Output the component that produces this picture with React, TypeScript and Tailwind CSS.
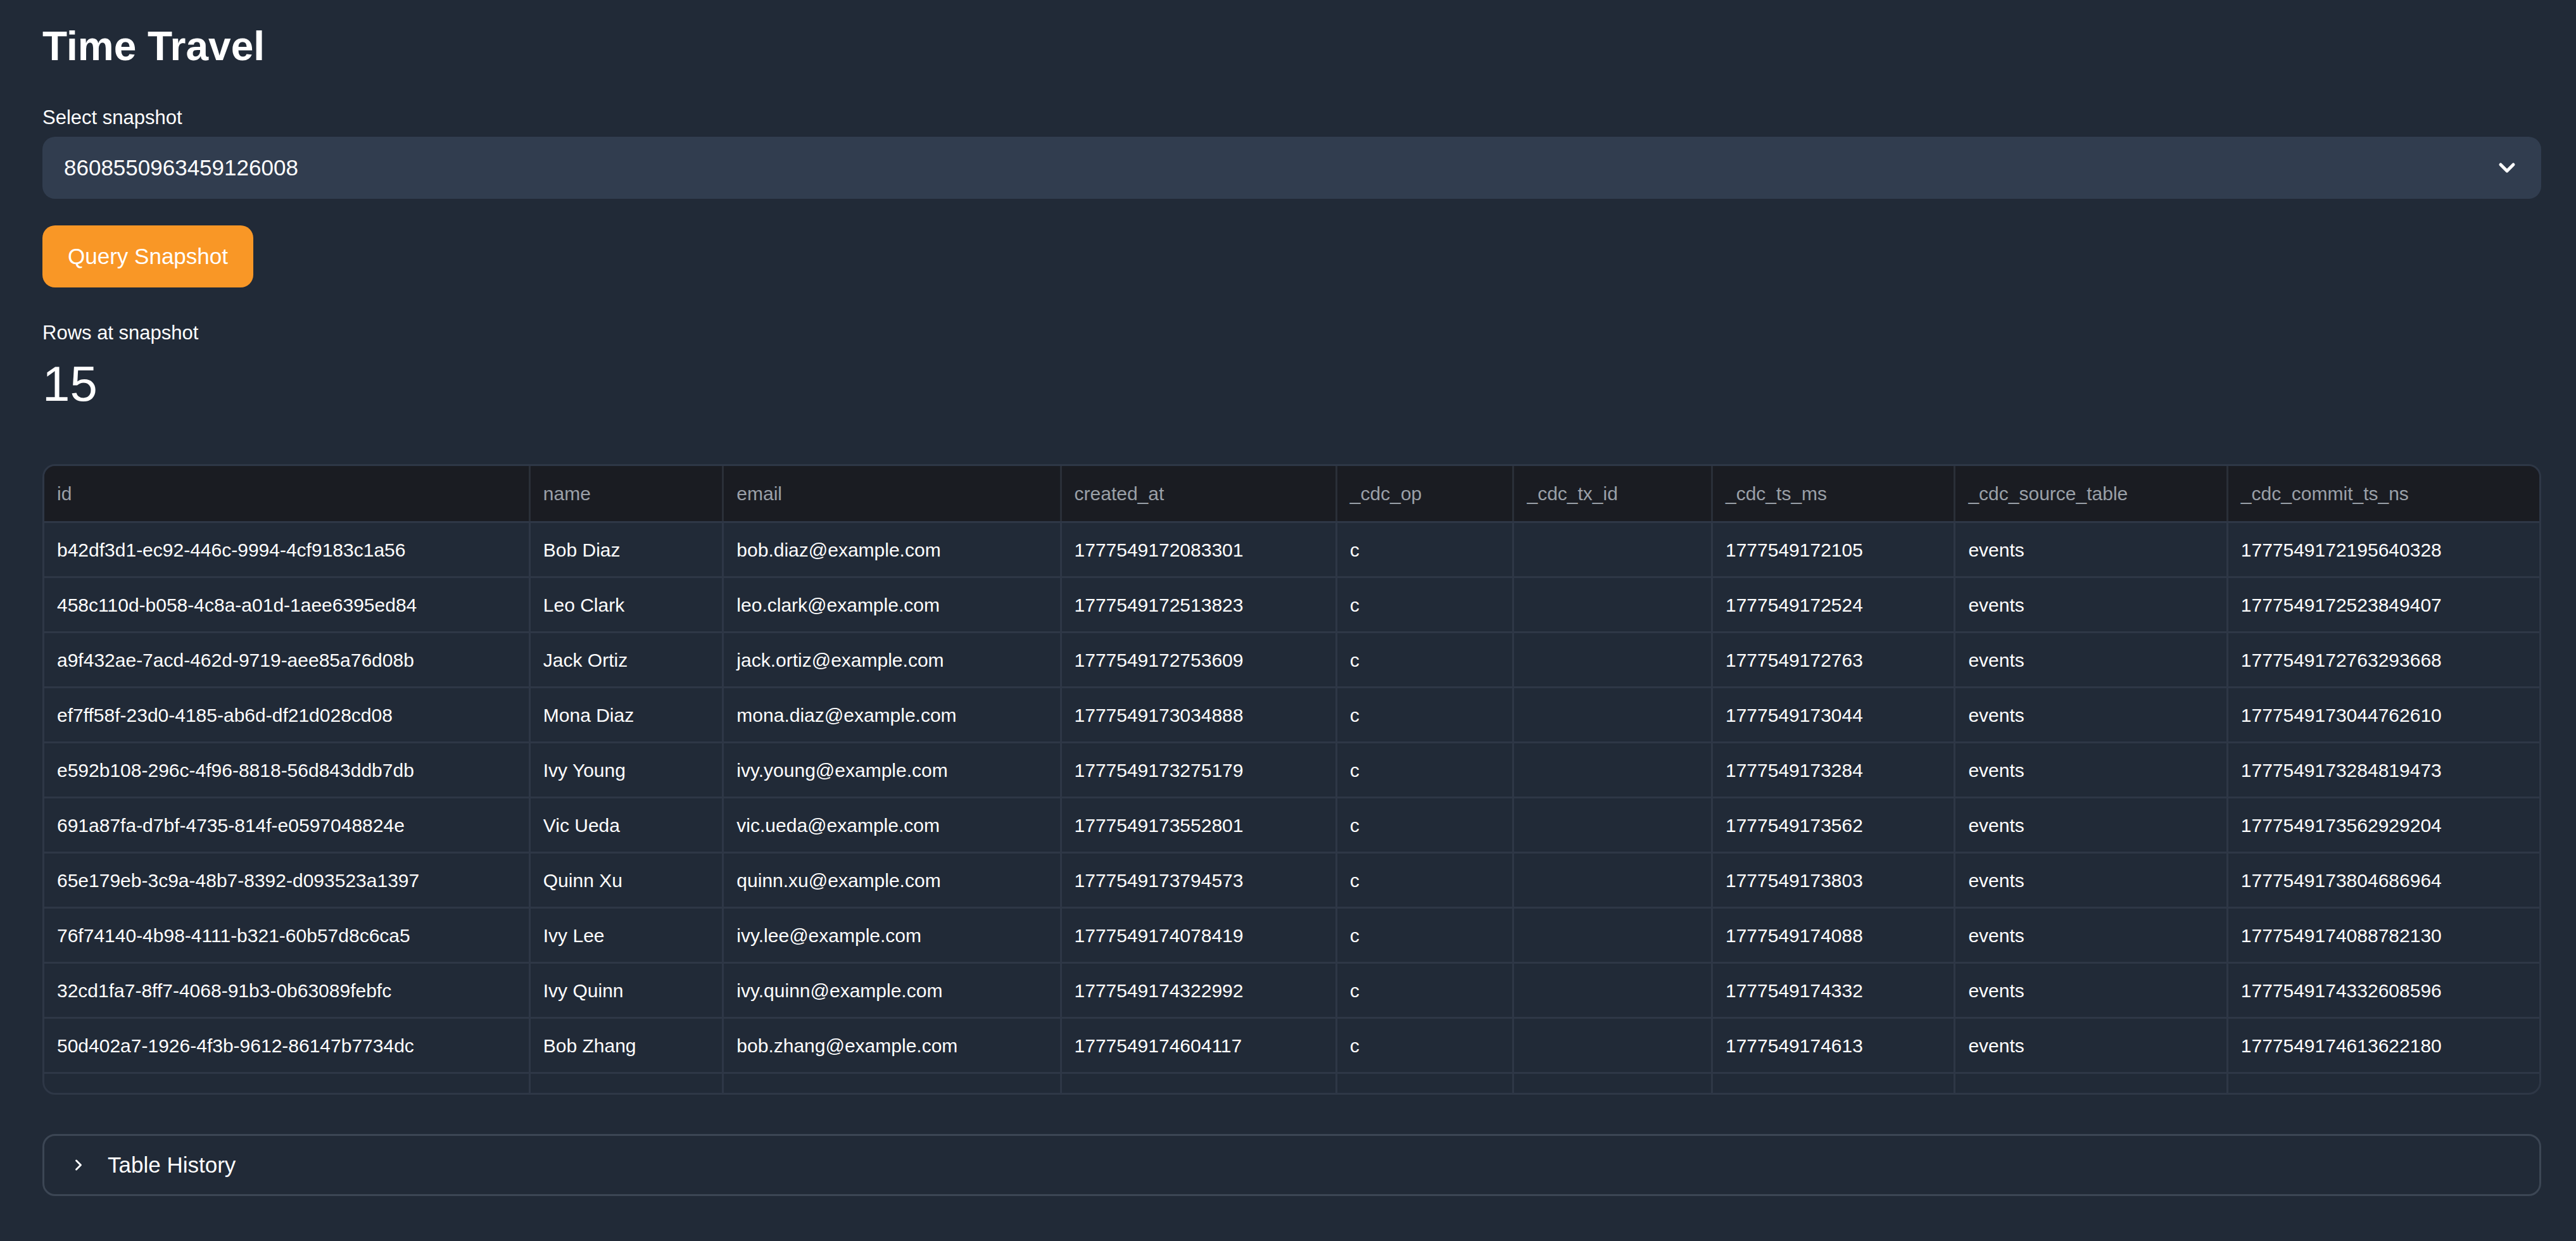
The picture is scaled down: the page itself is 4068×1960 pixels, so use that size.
import React from "react";

const cols = [
  { k: "id", w: 766 },
  { k: "name", w: 306 },
  { k: "email", w: 534 },
  { k: "created_at", w: 436 },
  { k: "_cdc_op", w: 280 },
  { k: "_cdc_tx_id", w: 314 },
  { k: "_cdc_ts_ms", w: 384 },
  { k: "_cdc_source_table", w: 431 },
  { k: "_cdc_commit_ts_ns", w: 495 },
];

const rows = [
  ["b42df3d1-ec92-446c-9994-4cf9183c1a56", "Bob Diaz", "bob.diaz@example.com", "1777549172083301", "c", "", "1777549172105", "events", "1777549172195640328"],
  ["458c110d-b058-4c8a-a01d-1aee6395ed84", "Leo Clark", "leo.clark@example.com", "1777549172513823", "c", "", "1777549172524", "events", "1777549172523849407"],
  ["a9f432ae-7acd-462d-9719-aee85a76d08b", "Jack Ortiz", "jack.ortiz@example.com", "1777549172753609", "c", "", "1777549172763", "events", "1777549172763293668"],
  ["ef7ff58f-23d0-4185-ab6d-df21d028cd08", "Mona Diaz", "mona.diaz@example.com", "1777549173034888", "c", "", "1777549173044", "events", "1777549173044762610"],
  ["e592b108-296c-4f96-8818-56d843ddb7db", "Ivy Young", "ivy.young@example.com", "1777549173275179", "c", "", "1777549173284", "events", "1777549173284819473"],
  ["691a87fa-d7bf-4735-814f-e0597048824e", "Vic Ueda", "vic.ueda@example.com", "1777549173552801", "c", "", "1777549173562", "events", "1777549173562929204"],
  ["65e179eb-3c9a-48b7-8392-d093523a1397", "Quinn Xu", "quinn.xu@example.com", "1777549173794573", "c", "", "1777549173803", "events", "1777549173804686964"],
  ["76f74140-4b98-4111-b321-60b57d8c6ca5", "Ivy Lee", "ivy.lee@example.com", "1777549174078419", "c", "", "1777549174088", "events", "1777549174088782130"],
  ["32cd1fa7-8ff7-4068-91b3-0b63089febfc", "Ivy Quinn", "ivy.quinn@example.com", "1777549174322992", "c", "", "1777549174332", "events", "1777549174332608596"],
  ["50d402a7-1926-4f3b-9612-86147b7734dc", "Bob Zhang", "bob.zhang@example.com", "1777549174604117", "c", "", "1777549174613", "events", "1777549174613622180"],
  ["e1d4aeff-3e2a-4cd9-a1a0-c0f1d5e00a21", "Ruth Kim", "ruth.kim@example.com", "1777549174873315", "c", "", "1777549174882", "events", "1777549174882410271"],
];

export default function App() {
  return (
    <div
      className="min-h-[1960px] w-full bg-[#212a37] text-white pl-[67px] pr-[55px] pt-[30px]"
      style={{ fontFamily: '"Liberation Sans", Arial, sans-serif' }}
    >
      <h1 className="text-[64px] font-bold leading-[86px]">Time Travel</h1>
      <div className="mt-[50px] text-[31px] leading-[40px]">Select snapshot</div>
      <div className="mt-[10px] h-[98px] rounded-[20px] bg-[#313d4f] flex items-center justify-between px-[34px]">
        <span className="text-[35px]">8608550963459126008</span>
        <svg width="40" height="40" viewBox="0 0 24 24" fill="none" stroke="white" strokeWidth="3" strokeLinecap="round" strokeLinejoin="round">
          <path d="M6 9l6 6 6-6" />
        </svg>
      </div>
      <button className="mt-[42px] h-[98px] w-[333px] rounded-[20px] bg-[#f99726] text-[35px] text-white flex items-center justify-center">
        Query Snapshot
      </button>
      <div className="mt-[52px] text-[31px] leading-[40px]">Rows at snapshot</div>
      <div className="mt-[10px] text-[78px] leading-[100px]">15</div>
      <div className="mt-[77px] h-[996px] rounded-[20px] border-[3px] border-[#2e3746] overflow-hidden">
        <div className="flex h-[87px] bg-[#1a1c22]">
          {cols.map((c, i) => (
            <div key={c.k} className={`h-full flex items-center px-[20px] text-[30px] text-[#9aa0a8] ${i > 0 ? "border-l-[3px] border-[#2a2f38]" : ""}`} style={{ width: c.w }}>
              {c.k}
            </div>
          ))}
        </div>
        {rows.map((r, ri) => (
          <div key={ri} className="flex h-[87px] border-t-[3px] border-[#2e3746]">
            {r.map((v, i) => (
              <div key={i} className={`h-full flex items-center px-[20px] text-[30px] text-white ${i > 0 ? "border-l-[3px] border-[#2e3746]" : ""}`} style={{ width: cols[i].w }}>
                {v}
              </div>
            ))}
          </div>
        ))}
      </div>
      <div className="mt-[62px] h-[98px] rounded-[20px] border-[3px] border-[#3c4654] flex items-center px-[40px] gap-[32px]">
        <svg width="28" height="28" viewBox="0 0 24 24" fill="none" stroke="white" strokeWidth="2.5" strokeLinecap="round" strokeLinejoin="round">
          <path d="M9 6l6 6-6 6" />
        </svg>
        <span className="text-[35px]">Table History</span>
      </div>
    </div>
  );
}
